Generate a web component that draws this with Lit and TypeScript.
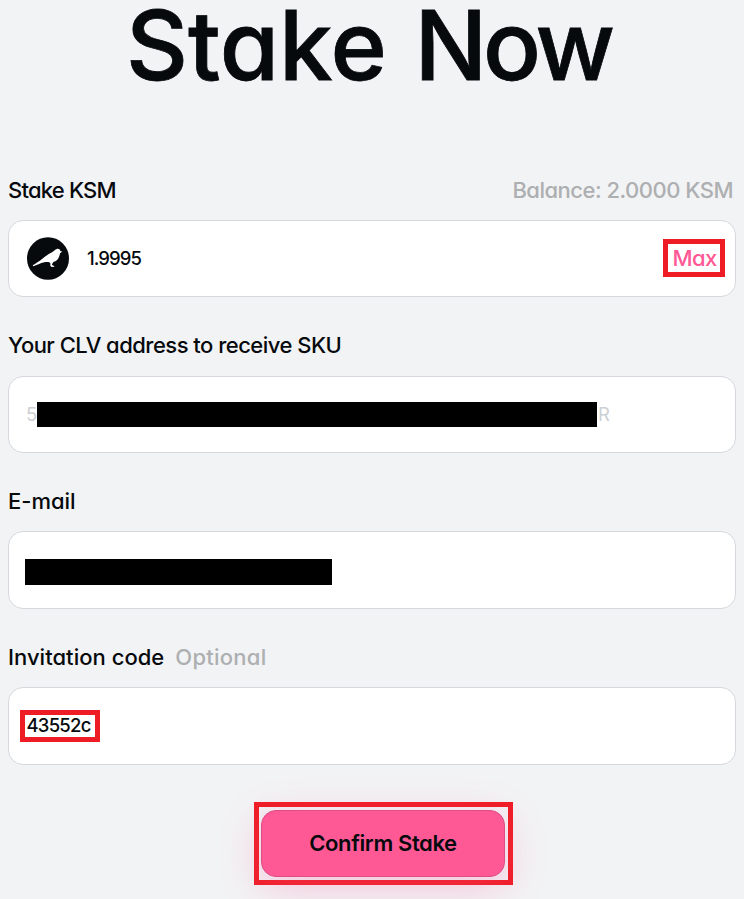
import { LitElement, html, css } from "lit";
import { customElement } from "lit/decorators.js";

@customElement("kusama-icon")
export class KusamaIcon extends LitElement {
  static styles = css`
    :host { display: block; width: 42px; height: 43px; flex: none; }
    svg { display: block; }
  `;
  render() {
    return html`<svg width="42" height="43" viewBox="21 21 126 129" aria-hidden="true">
      <ellipse cx="84" cy="85.5" rx="63" ry="64" fill="#060a0d" />
      <path fill="#fff" d="M127 65 L121 63 C120 57 114 55 109 58 C104 60 101 64 96 67 C85 73 75 79 67 86 C57 94 47 100 38 106 L40 109 C50 105 61 100 73 97 C80 96 84 96 88 97 L92 102 C89 105 91 107 95 111 L103 110 L103 108 L97 106 L96 103 L100 96 C109 93 115 87 117 80 C120 75 119 70 122 68 Z" />
    </svg>`;
  }
}

@customElement("app-root")
export class AppRoot extends LitElement {
  static styles = css`
    :host {
      display: block;
      box-sizing: border-box;
      height: 899px;
      overflow: hidden;
      background: #f2f3f5;
      color: #060a0d;
      font-family: Inter, sans-serif;
      font-weight: 500;
      font-feature-settings: "cv11";
    }
    * { box-sizing: border-box; }
    h1 {
      margin: 0 0 85px;
      height: 90px;
      padding-right: 7px;
      font-size: 96px;
      line-height: 90px;
      font-weight: 500;
      text-align: center;
      word-spacing: 2px;
      white-space: nowrap;
      -webkit-text-stroke: 0.8px #060a0d;
    }
    .now { letter-spacing: -4px; }
    form {
      display: grid;
      grid-template-rows: 122px 123px 123px 123px;
      row-gap: 33px;
      padding: 0 8px;
    }
    .field { display: flex; flex-direction: column; justify-content: space-between; }
    .label {
      display: flex;
      height: 30px;
      font-size: 22px;
      line-height: 30px;
      white-space: nowrap;
    }
    .balance { margin-left: auto; padding-right: 3px; letter-spacing: -0.5px; color: #adafb1; }
    .optional { margin-left: 11px; letter-spacing: 0.25px; color: #adafb1; }
    .stake { letter-spacing: -0.8px; }
    .address { letter-spacing: -0.52px; }
    .email { letter-spacing: 0; }
    .code { letter-spacing: 0.03px; }
    .box {
      display: flex;
      align-items: center;
      height: 77px;
      border: 1px solid #d5d8dc;
      border-radius: 15px;
      background: #fff;
      font-size: 18.5px;
      line-height: 24px;
    }
    .tall { height: 78px; }
    .amount { padding-left: 18px; padding-right: 10px; }
    .value { margin: 0 0 1px 18px; letter-spacing: -0.9px; }
    .mark { border: 5px solid #ee1c25; display: flex; align-items: center; justify-content: center; }
    .max {
      width: 62px;
      height: 38px;
      margin: 0 0 2px auto;
      padding-left: 1px;
      font-size: 22px;
      letter-spacing: -0.6px;
      color: #ff5995;
    }
    .key { padding-left: 18px; font-weight: 400; color: #cdd0d4; }
    .five { width: 10px; margin: 0 0 1px -1px; }
    .bar { background: #000; }
    .bar-key { width: 560px; height: 25px; margin-left: 1px; }
    .bar-mail { width: 307px; height: 26px; margin: 4px 0 0 16px; }
    .last { margin: 0 0 1px 1px; }
    .invite { width: 80px; height: 32px; margin-left: 11px; letter-spacing: -0.75px; padding: 0 3px 2px 0; }
    .action { width: 259px; height: 83px; margin: 37px 0 0 254px; padding-right: 1px; }
    button {
      width: 244px;
      height: 67px;
      padding: 0 0 2px;
      border: 1px solid #dd4e86;
      border-radius: 15px;
      background: #ff5995;
      box-shadow: 0 10px 40px rgba(255, 89, 149, 0.3);
      color: #060a0d;
      font: 600 22px/30px Inter, sans-serif;
      font-feature-settings: "cv11";
      letter-spacing: -0.38px;
    }
  `;

  render() {
    return html`
      <h1>Stake <span class="now">Now</span></h1>
      <form>
        <div class="field">
          <div class="label"><span class="stake">Stake KSM</span><span class="balance">Balance: 2.0000 KSM</span></div>
          <div class="box amount">
            <kusama-icon></kusama-icon>
            <span class="value">1.9995</span>
            <span class="mark max">Max</span>
          </div>
        </div>
        <div class="field">
          <div class="label"><span class="address">Your CLV address to receive SKU</span></div>
          <div class="box key"><span class="five">5</span><span class="bar bar-key"></span><span class="last">R</span></div>
        </div>
        <div class="field">
          <div class="label"><span class="email">E-mail</span></div>
          <div class="box tall"><span class="bar bar-mail"></span></div>
        </div>
        <div class="field">
          <div class="label"><span class="code">Invitation code</span><span class="optional">Optional</span></div>
          <div class="box tall"><span class="mark invite">43552c</span></div>
        </div>
      </form>
      <div class="mark action"><button type="button">Confirm Stake</button></div>
    `;
  }
}
